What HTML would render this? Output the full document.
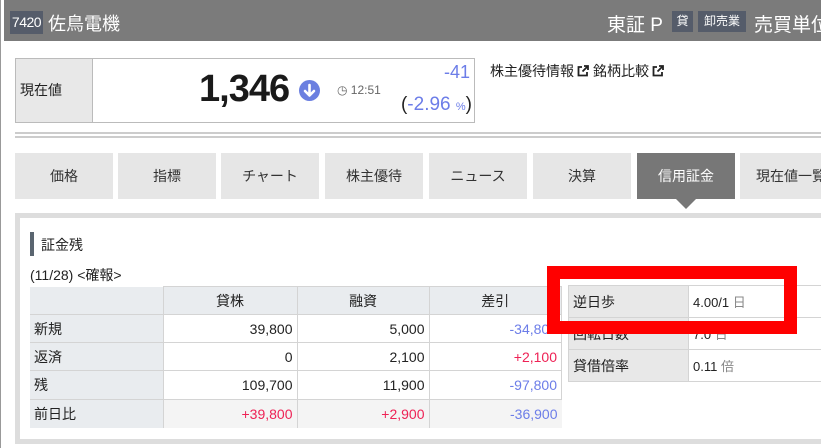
<!DOCTYPE html>
<html><head><meta charset="utf-8"><style>
*{margin:0;padding:0;box-sizing:border-box}
body{width:821px;height:448px;overflow:hidden;background:#fff;font-family:"Liberation Sans","Noto Sans CJK JP",sans-serif;color:#222;position:relative}
.a{position:absolute}
.tab{position:absolute;top:153px;height:46px;width:98px;background:#e6e6e6;font-size:14px;line-height:46px;text-align:center;color:#333}
table{border-collapse:collapse;position:absolute;font-size:14px}
td{border:1px solid #d4d4d4;padding:0 4px;height:28px}
.l td:first-child{background:#e9ecef}
.b{color:#6c7de8}.r{color:#ee2255}
.bd{position:absolute;background:#555c6a;color:#fff;text-align:center;white-space:nowrap}
.ext{display:inline-block;vertical-align:-1px;margin:0 4px 0 3px}
</style></head><body>
<div class="a" style="left:0;top:0;width:5px;height:448px;border-left:1px solid #999"></div>
<div class="a" style="left:4px;top:0;width:817px;height:41px;background:#7b7b7b;color:#fff;font-size:18px">
 <div class="bd" style="left:6px;top:11px;width:33px;height:23px;line-height:23px;font-size:14px;letter-spacing:-0.5px">7420</div>
 <span class="a" style="left:44px;top:10px">佐鳥電機</span>
 <span class="a" style="left:603px;top:10px;font-size:19px">東証 P</span>
 <div class="bd" style="left:668px;top:11px;width:21px;height:21px;line-height:21px;font-size:12px">貸</div>
 <div class="bd" style="left:694px;top:11px;width:48px;height:21px;line-height:21px;font-size:12px">卸売業</div>
 <span class="a" style="left:750px;top:10px;white-space:nowrap;font-size:19px">売買単位</span>
</div>
<div class="a" style="left:15px;top:58px;width:460px;height:65px;border:1px solid #bbb"></div>
<div class="a" style="left:16px;top:59px;width:77px;height:63px;background:#e8e8e8;border-right:1px solid #bbb;font-size:14px;line-height:63px;padding-left:4px">現在値</div>
<div class="a" style="left:199px;top:68px;font-size:38px;font-weight:bold;color:#1a1a1a;letter-spacing:-1px">1,346</div>
<svg class="a" style="left:299px;top:80px" width="21" height="21" viewBox="0 0 21 21"><circle cx="10.5" cy="10.5" r="10.5" fill="#6b7fe0"/><path d="M10.5 5v10M6 11l4.5 4.5L15 11" stroke="#fff" stroke-width="2.6" fill="none" stroke-linecap="round" stroke-linejoin="round"/></svg>
<div class="a" style="left:337px;top:83px;font-size:12px;color:#666">◷ 12:51</div>
<div class="a" style="left:400px;top:62px;width:70px;text-align:right;font-size:18px" ><span class="b">-41</span></div>
<div class="a" style="left:390px;top:94px;width:82px;text-align:right;font-size:19px">(<span class="b">-2.96 <small style="font-size:11px">%</small></span>)</div>
<div class="a" style="left:490px;top:61px;font-size:14px">株主優待情報<svg class="ext" width="12" height="12" viewBox="0 0 12 12"><path d="M5 2H1.5v8.5H10V7" stroke="#222" stroke-width="1.8" fill="none"/><path d="M7 1h4v4M11 1L5.5 6.5" stroke="#222" stroke-width="1.8" fill="none"/></svg>銘柄比較<svg class="ext" width="12" height="12" viewBox="0 0 12 12"><path d="M5 2H1.5v8.5H10V7" stroke="#222" stroke-width="1.8" fill="none"/><path d="M7 1h4v4M11 1L5.5 6.5" stroke="#222" stroke-width="1.8" fill="none"/></svg></div>
<div class="a" style="left:15px;top:132px;width:806px;height:6px;border-top:2px solid #ccc;border-bottom:2px solid #ccc"></div>
<div class="tab" style="left:15px">価格</div>
<div class="tab" style="left:118px">指標</div>
<div class="tab" style="left:221px">チャート</div>
<div class="tab" style="left:325px">株主優待</div>
<div class="tab" style="left:429px">ニュース</div>
<div class="tab" style="left:533px">決算</div>
<div class="tab" style="left:637px;background:#777;color:#fff">信用証金</div>
<div class="tab" style="left:740px;width:90px;text-align:left;padding-left:16px;white-space:nowrap">現在値一覧</div>
<div class="a" style="left:676px;top:199px;border-left:10px solid transparent;border-right:10px solid transparent;border-top:10px solid #777"></div>
<div class="a" style="left:15px;top:213px;width:820px;height:231px;border:5px solid #ddd"></div>
<div class="a" style="left:30px;top:232px;width:4px;height:24px;background:#5a6570"></div>
<div class="a" style="left:41px;top:235px;font-size:14px">証金残</div>
<div class="a" style="left:30px;top:265px;font-size:14px">(11/28) &lt;確報&gt;</div>
<table class="l" style="left:30px;top:286px;width:532px">
<tr style="background:#e9ecef"><td style="width:133px;border-top:0;border-left:0"></td><td style="text-align:center;width:134px">貸株</td><td style="text-align:center;width:132px">融資</td><td style="text-align:center">差引</td></tr>
<tr><td style="border-left:0">新規</td><td align="right">39,800</td><td align="right">5,000</td><td align="right" class="b">-34,800</td></tr>
<tr><td style="border-left:0">返済</td><td align="right">0</td><td align="right">2,100</td><td align="right" class="r">+2,100</td></tr>
<tr><td style="border-left:0;height:29px">残</td><td align="right">109,700</td><td align="right">11,900</td><td align="right" class="b">-97,800</td></tr>
<tr style="background:#f4f4f4"><td style="border:0">前日比</td><td align="right" class="r" style="border-bottom:0">+39,800</td><td align="right" class="r" style="border-bottom:0">+2,900</td><td align="right" class="b" style="border-bottom:0;border-right:0">-36,900</td></tr>
</table>
<table style="left:568px;top:285px;width:260px;border:1px solid #bbb;font-size:13px">
<tr><td style="width:120px;background:#e8e8e8;height:32px;font-size:14px">逆日歩</td><td>4.00/1 <span style="color:#888">日</span></td></tr>
<tr><td style="background:#e8e8e8;height:32px;font-size:14px">回転日数</td><td>7.0 <span style="color:#888">日</span></td></tr>
<tr><td style="background:#e8e8e8;height:32px;font-size:14px">貸借倍率</td><td>0.11 <span style="color:#888">倍</span></td></tr>
</table>
<div class="a" style="left:547px;top:266px;width:250px;height:68px;border:13px solid #ff0000"></div>
</body></html>
